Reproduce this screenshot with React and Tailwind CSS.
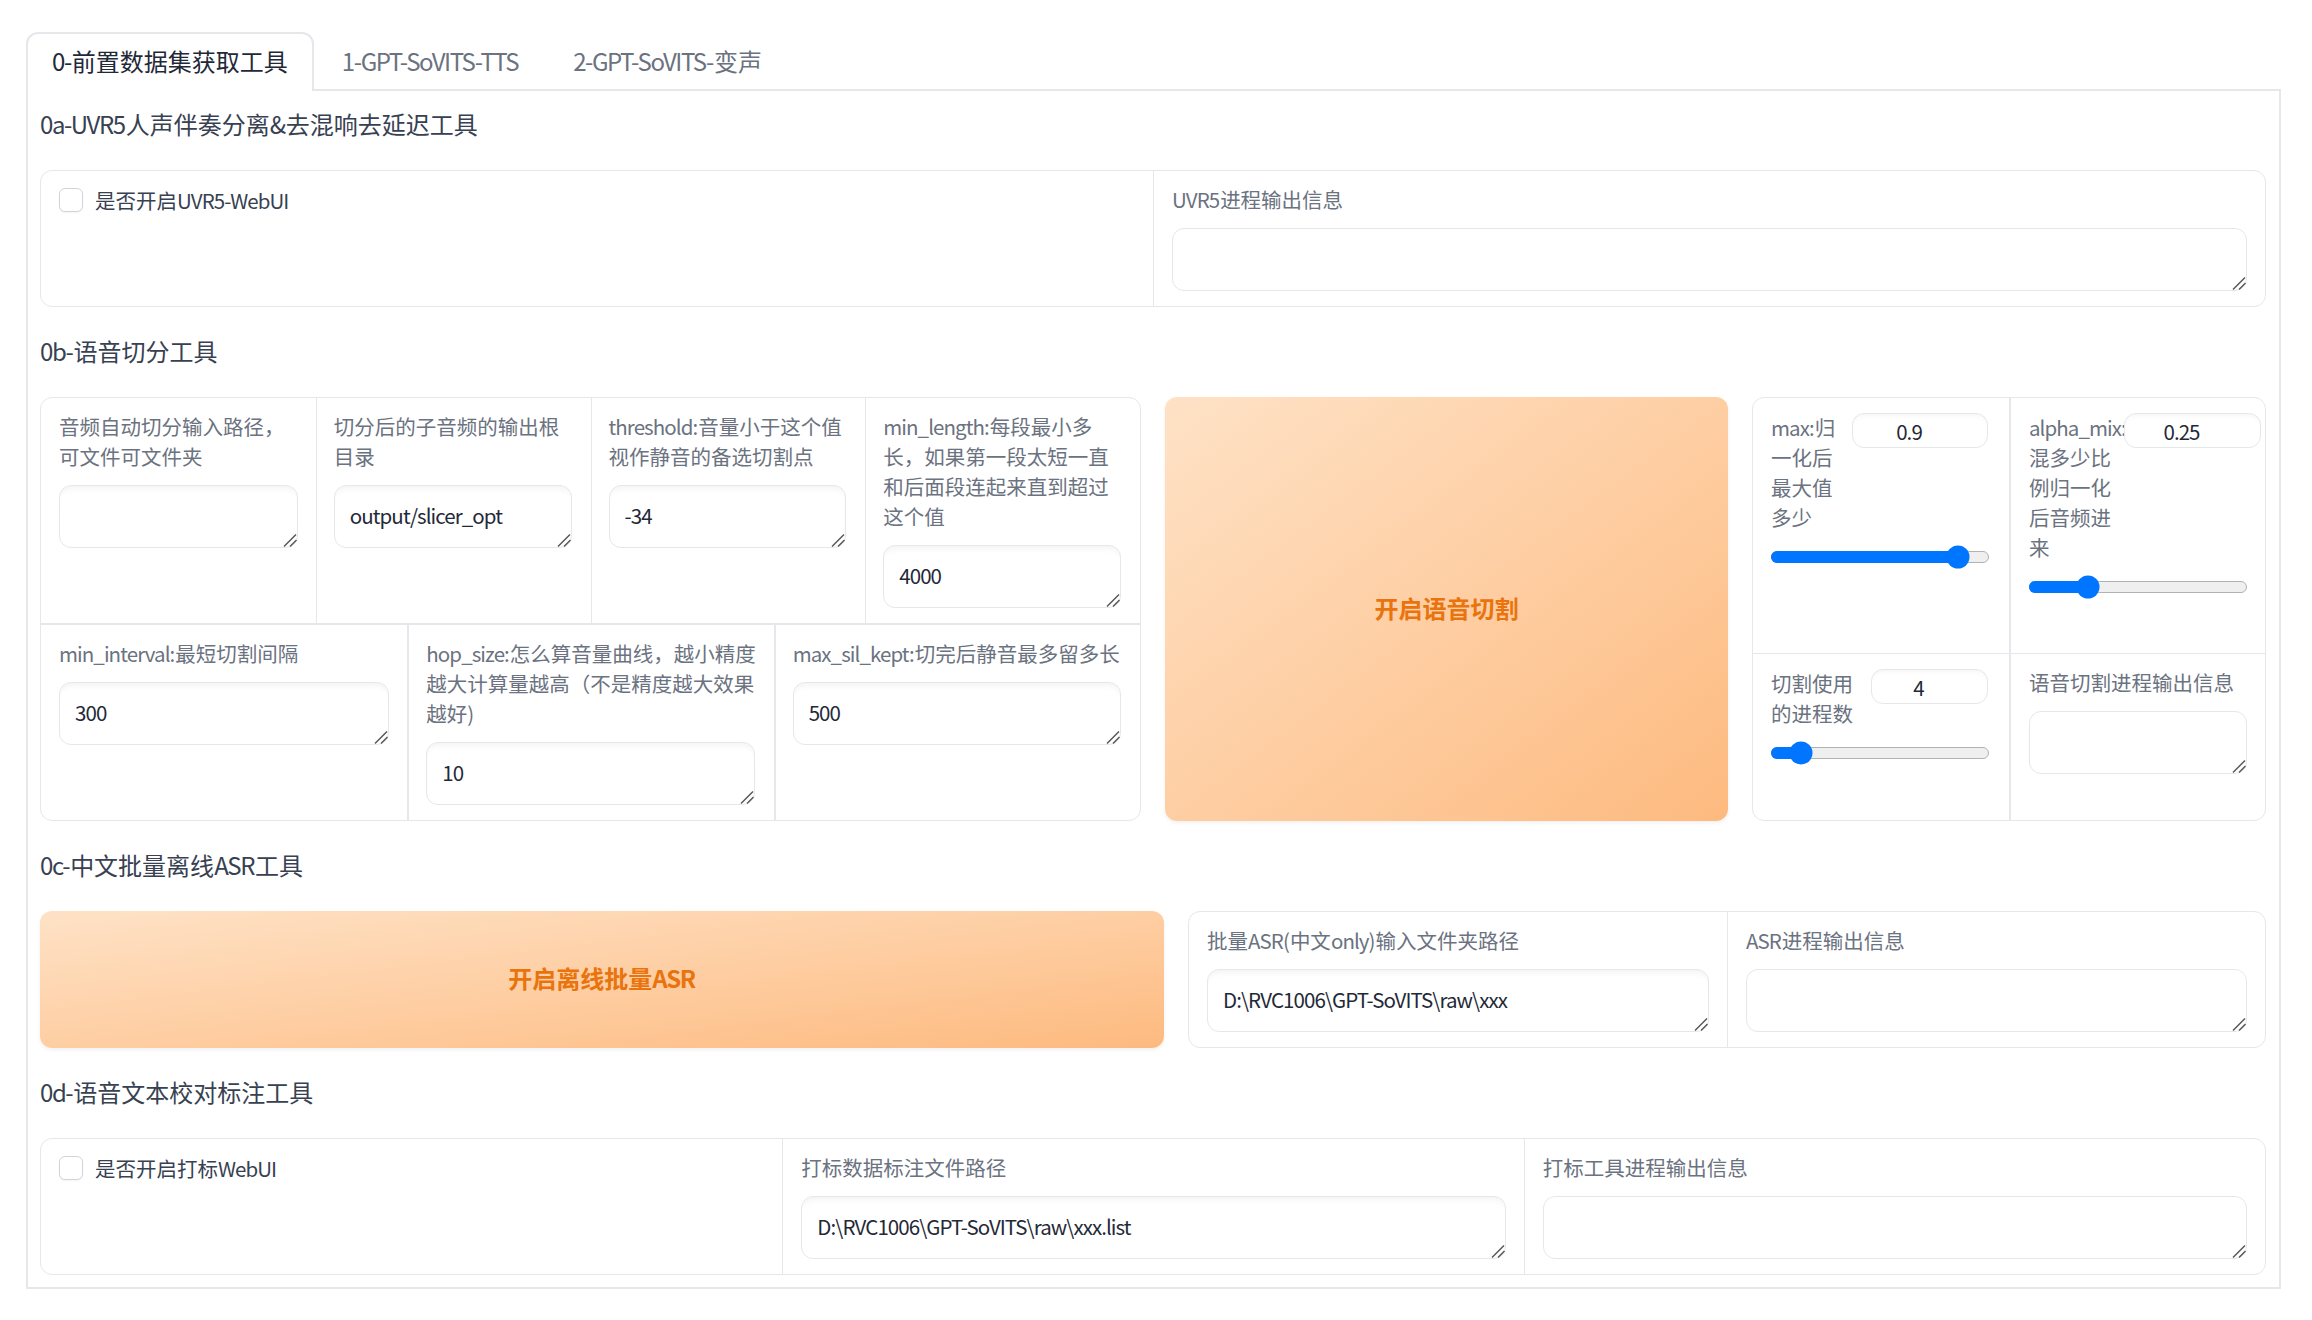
import React from "react";

function T({ children, tight }) {
  return String(children)
    .split(/([\x00-\x7f]+)/)
    .filter(Boolean)
    .map((run, i) =>
      /^[\x00-\x7f]+$/.test(run) ? (
        <span key={i} className={tight ? "tracking-[-0.06em] mr-[0.045em]" : "tracking-[-0.045em] mr-[0.045em]"}>{run}</span>
      ) : (
        <span key={i}>{run}</span>
      )
    );
}

function Handle() {
  return (
    <svg className="absolute right-[1px] bottom-[1px] pointer-events-none" width="14" height="14" viewBox="0 0 14 14" fill="none" stroke="#555555" strokeWidth="1.4">
      <path d="M1 13.5L13 1.5" />
      <path d="M7 13.5L13.5 7" />
    </svg>
  );
}

function Field({ value = "", plain = false }) {
  return (
    <div className="relative">
      <textarea
        readOnly
        defaultValue={value}
        rows={1}
        className={
          "block w-full h-[63px] resize-none rounded-[12px] border border-[#e5e7eb] bg-white pl-[15px] pr-[15px] py-[14px] text-[20.5px] leading-[30px] tracking-[-0.045em] text-[#1f2937] outline-none " +
          (plain ? "" : "shadow-[inset_0_7px_7px_-5px_rgba(0,0,0,0.06)]")
        }
      />
      <Handle />
    </div>
  );
}

function Label({ lines }) {
  return (
    <div className="text-[20.5px] leading-[30px] text-[#6b7280]">
      {lines.map((line, i) => (
        <div key={i}><T>{line}</T></div>
      ))}
    </div>
  );
}

function TextCell({ label, value, plain, className = "" }) {
  return (
    <div className={"px-[18px] pt-[13px] pb-[15px] " + className}>
      <div className="mb-[14px]">
        <Label lines={Array.isArray(label) ? label : [label]} />
      </div>
      <Field value={value} plain={plain} />
    </div>
  );
}

function CheckCell({ label, className = "" }) {
  return (
    <div className={"flex items-start px-[18px] pt-[14px] " + className}>
      <label className="flex items-center h-[30px]">
        <span className="block w-[24px] h-[24px] rounded-[6px] border border-[#d1d5db] bg-white shadow-[0_1px_2px_rgba(0,0,0,0.05)]" />
        <span className="ml-3 text-[20.5px] leading-[30px] text-[#374151]"><T>{label}</T></span>
      </label>
    </div>
  );
}

function Heading({ children, first }) {
  return (
    <h2 className={(first ? "mt-[15px] mb-[28px]" : "mt-[26px] mb-[28px]") + " text-[24px] leading-[36px] font-normal text-[#374151]"}>
      <T tight>{children}</T>
    </h2>
  );
}

function Slider({ pct, className = "" }) {
  return (
    <div className={"relative w-[218px] h-[12px] rounded-full border border-[#b2b2b2] bg-[#efefef] " + className}>
      <div className="absolute -left-px -top-px h-[12px] rounded-full bg-[#0075ff]" style={{ width: pct + "%" }} />
      <div
        className="absolute top-1/2 w-[23px] h-[23px] -translate-x-1/2 -translate-y-1/2 rounded-full bg-[#0075ff]"
        style={{ left: pct + "%" }}
      />
    </div>
  );
}

function NumberBox({ value, className = "" }) {
  return (
    <input
      readOnly
      type="text"
      defaultValue={value}
      className={
        "block h-[35px] shrink-0 rounded-[12px] border border-[#e5e7eb] bg-white pr-[22px] text-center text-[20.5px] tracking-[-0.045em] text-[#1f2937] outline-none shadow-[inset_0_5px_5px_-4px_rgba(0,0,0,0.05)] " +
        className
      }
    />
  );
}

function SliderCell({ lines, labelW, inputW, value, pct, sliderClass, className = "" }) {
  return (
    <div className={"min-w-0 px-[18px] pt-[15px] " + className}>
      <div className="flex items-start">
        <div className={"shrink-0 -mt-px " + labelW}>
          <Label lines={lines} />
        </div>
        <NumberBox value={value} className={inputW} />
      </div>
      <Slider pct={pct} className={sliderClass} />
    </div>
  );
}

function ActionButton({ children, className = "" }) {
  return (
    <button className={"flex items-center justify-center rounded-[12px] bg-gradient-to-br from-[#fee2c6] to-[#fdba7f] pb-[3px] text-[24px] font-bold text-[#e9730c] shadow-[0_2px_4px_rgba(0,0,0,0.06)] " + className}>
      <span><T tight>{children}</T></span>
    </button>
  );
}

const blockCls = "rounded-[12px] border border-[#e5e7eb] bg-white overflow-hidden";

export default function App() {
  return (
    <div
      lang="zh-CN"
      className="w-[2312px] h-[1320px] bg-white pt-8 pl-[26px] overflow-hidden"
      style={{ fontFamily: '"Noto Sans CJK SC", "Noto Sans", sans-serif' }}
    >
      <div className="relative z-10 flex h-[59px] text-[24px] leading-[36px]">
        <div className="h-[59px] rounded-t-[12px] border-2 border-b-0 border-[#e5e7eb] bg-white px-6 pt-[9px] text-[#1f2937]">
          <T tight>0-前置数据集获取工具</T>
        </div>
        <div className="pl-[28px] pr-[26px] pt-[11px] text-[#6b7280]"><T tight>1-GPT-SoVITS-TTS</T></div>
        <div className="pl-[28px] pt-[11px] text-[#6b7280]"><T tight>2-GPT-SoVITS-变声</T></div>
      </div>

      <div className="w-[2255px] h-[1200px] -mt-[2px] border-2 border-[#e5e7eb] bg-white pl-3 pr-[13px]">
        <Heading first>0a-UVR5人声伴奏分离&去混响去延迟工具</Heading>
        <div className={"grid grid-cols-2 " + blockCls}>
          <CheckCell label="是否开启UVR5-WebUI" />
          <TextCell label="UVR5进程输出信息" plain className="border-l border-[#e5e7eb]" />
        </div>

        <Heading>0b-语音切分工具</Heading>
        <div className="flex items-stretch gap-6">
          <div className={"w-[1101px] shrink-0 " + blockCls}>
            <div className="grid grid-cols-4 border-b-2 border-[#e5e7eb]">
              <TextCell label="音频自动切分输入路径，可文件可文件夹" />
              <TextCell label="切分后的子音频的输出根目录" value="output/slicer_opt" className="border-l border-[#e5e7eb] pl-[17px] pr-[19px]" />
              <TextCell label={["threshold:音量小于这个值", "视作静音的备选切割点"]} value="-34" className="border-l border-[#e5e7eb] pl-[17px] pr-[19px]" />
              <TextCell
                label={["min_length:每段最小多", "长，如果第一段太短一直", "和后面段连起来直到超过", "这个值"]}
                value="4000"
                className="border-l border-[#e5e7eb] pl-[17px] pr-[19px]"
              />
            </div>
            <div className="grid grid-cols-3">
              <TextCell label="min_interval:最短切割间隔" value="300" />
              <TextCell
                label={["hop_size:怎么算音量曲线，越小精度", "越大计算量越高（不是精度越大效果", "越好)"]}
                value="10"
                className="border-l-2 border-[#e5e7eb] pl-[17px] pr-[19px] whitespace-nowrap"
              />
              <TextCell label="max_sil_kept:切完后静音最多留多长" value="500" className="border-l-2 border-[#e5e7eb] pl-[17px] pr-[19px]" />
            </div>
          </div>

          <ActionButton className="flex-1">开启语音切割</ActionButton>

          <div className={"w-[514px] shrink-0 grid grid-cols-[256px_minmax(0,1fr)] grid-rows-[256px_1fr] " + blockCls}>
            <SliderCell
              lines={["max:归", "一化后", "最大值", "多少"]}
              labelW="w-[81px]"
              inputW="w-[136px]"
              value="0.9"
              pct={86}
              sliderClass="mt-[19px]"
              className="border-b border-[#e5e7eb]"
            />
            <SliderCell
              lines={["alpha_mix:", "混多少比", "例归一化", "后音频进", "来"]}
              labelW="w-[95px]"
              inputW="w-[137px]"
              value="0.25"
              pct={27}
              sliderClass="mt-[19px]"
              className="border-l-2 border-b border-[#e5e7eb]"
            />
            <SliderCell
              lines={["切割使用", "的进程数"]}
              labelW="w-[100px]"
              inputW="w-[117px]"
              value="4"
              pct={13.4}
              sliderClass="mt-[19px]"
            />
            <TextCell label="语音切割进程输出信息" plain className="border-l-2 border-[#e5e7eb]" />
          </div>
        </div>

        <Heading>0c-中文批量离线ASR工具</Heading>
        <div className="flex items-stretch gap-6">
          <ActionButton className="w-[1124px] shrink-0">开启离线批量ASR</ActionButton>
          <div className={"flex-1 grid grid-cols-[538px_minmax(0,1fr)] " + blockCls}>
            <TextCell label="批量ASR(中文only)输入文件夹路径" value="D:\RVC1006\GPT-SoVITS\raw\xxx" />
            <TextCell label="ASR进程输出信息" plain className="border-l border-[#e5e7eb]" />
          </div>
        </div>

        <Heading>0d-语音文本校对标注工具</Heading>
        <div className={"grid grid-cols-3 " + blockCls}>
          <CheckCell label="是否开启打标WebUI" />
          <TextCell label="打标数据标注文件路径" value="D:\RVC1006\GPT-SoVITS\raw\xxx.list" className="border-l border-[#e5e7eb]" />
          <TextCell label="打标工具进程输出信息" plain className="border-l border-[#e5e7eb]" />
        </div>
      </div>
    </div>
  );
}
